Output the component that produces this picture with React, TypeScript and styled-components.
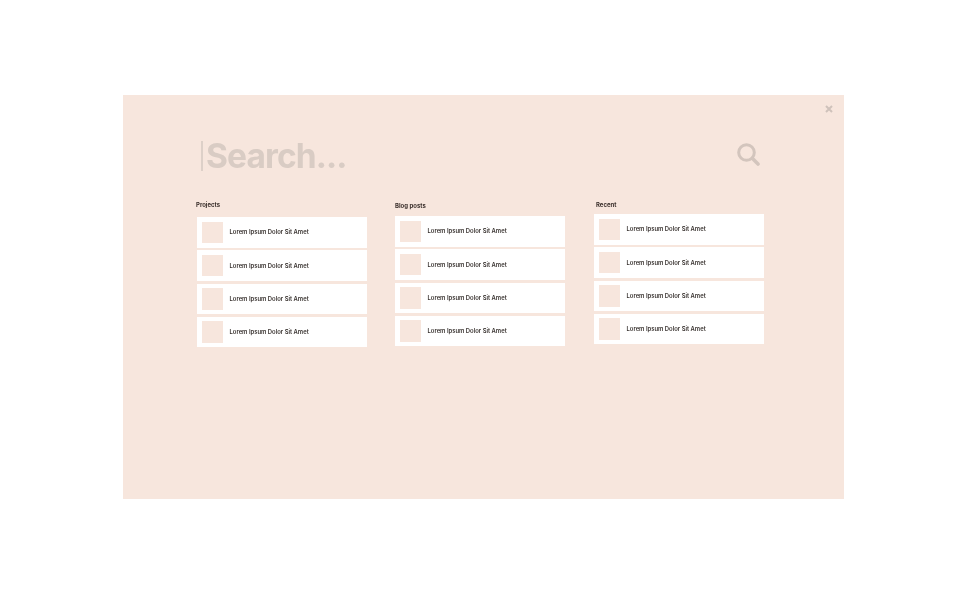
import React from 'react';
import styled, {createGlobalStyle} from 'styled-components';

const peach = '#f7e6dd';

const GlobalStyle = createGlobalStyle`
  html, body {
    margin: 0;
    background: #fff;
    font-family: "Inter", "Open Sans", sans-serif;
  }
`;

const Page = styled.div`
  width: 967px;
  height: 595px;
  padding: 95px 123px 96px 123px;
  box-sizing: border-box;
`;

const Panel = styled.div`
  position: relative;
  width: 721px;
  height: 404px;
  background: ${peach};
  padding: 38px 80px 0 74px;
  box-sizing: border-box;
`;

const CloseIcon = styled.svg`
  position: absolute;
  top: 10px;
  right: 11px;
  width: 8px;
  height: 8px;
  filter: blur(0.3px);
`;

const SearchBar = styled.div`
  display: flex;
  align-items: center;
  justify-content: space-between;
  height: 46px;
  padding-left: 4px;
  filter: blur(0.4px);
`;

const SearchText = styled.div`
  font-size: 33.5px;
  font-weight: 700;
  letter-spacing: -0.9px;
  color: #d9ccc4;
  border-left: 2px solid #ddd0c8;
  line-height: 30px;
  padding-left: 3px;
`;

const SearchIcon = styled.svg`
  width: 23px;
  height: 23px;
  margin: 0 4px 3px 0;
`;

const Columns = styled.div`
  display: grid;
  grid-template-columns: 198px 199px 170px;
  align-items: start;
  margin-top: 16px;
  filter: blur(0.3px);
`;

const Column = styled.section<{$top: number}>`
  display: flex;
  flex-direction: column;
  width: 170px;
  padding-top: ${props => props.$top}px;
`;

const ColumnTitle = styled.h3<{$gap: number; $indent: number}>`
  margin: 0 0 ${props => props.$gap}px ${props => props.$indent}px;
  font-size: 6px;
  font-weight: 700;
  line-height: 8px;
  color: #3a2f2b;
`;

const Row = styled.div`
  display: flex;
  align-items: center;
  gap: 6.5px;
  height: 30.5px;
  margin-bottom: 2.8px;
  padding-left: 5px;
  background: #fff;
`;

const Thumb = styled.div`
  width: 21px;
  height: 21.5px;
  background: ${peach};
`;

const RowText = styled.span`
  font-size: 5.9px;
  font-weight: 600;
  color: #38322f;
  white-space: nowrap;
  padding-bottom: 1px;
`;

const columns = [
  {title: 'Projects', top: 6, gap: 8, indent: -1},
  {title: 'Blog posts', top: 6.5, gap: 6.5, indent: 0},
  {title: 'Recent', top: 6, gap: 5, indent: 2},
];

export default function App() {
  return (
    <Page>
      <GlobalStyle/>
      <Panel>
        <CloseIcon viewBox="0 0 8 8">
          <path d="M1 1 L7 7 M7 1 L1 7" stroke="#cfc2bb" strokeWidth="2"/>
        </CloseIcon>
        <SearchBar>
          <SearchText>Search...</SearchText>
          <SearchIcon viewBox="0 0 23 23" fill="none" stroke="#d3c5bd">
            <circle cx="9.5" cy="9.5" r="7.8" strokeWidth="3"/>
            <path d="M15.5 15.5 L21 21" strokeWidth="3.6" strokeLinecap="round"/>
          </SearchIcon>
        </SearchBar>
        <Columns>
          {columns.map(column => (
            <Column key={column.title} $top={column.top}>
              <ColumnTitle $gap={column.gap} $indent={column.indent}>{column.title}</ColumnTitle>
              {[0, 1, 2, 3].map(i => (
                <Row key={i}>
                  <Thumb/>
                  <RowText>Lorem Ipsum Dolor Sit Amet</RowText>
                </Row>
              ))}
            </Column>
          ))}
        </Columns>
      </Panel>
    </Page>
  );
}
